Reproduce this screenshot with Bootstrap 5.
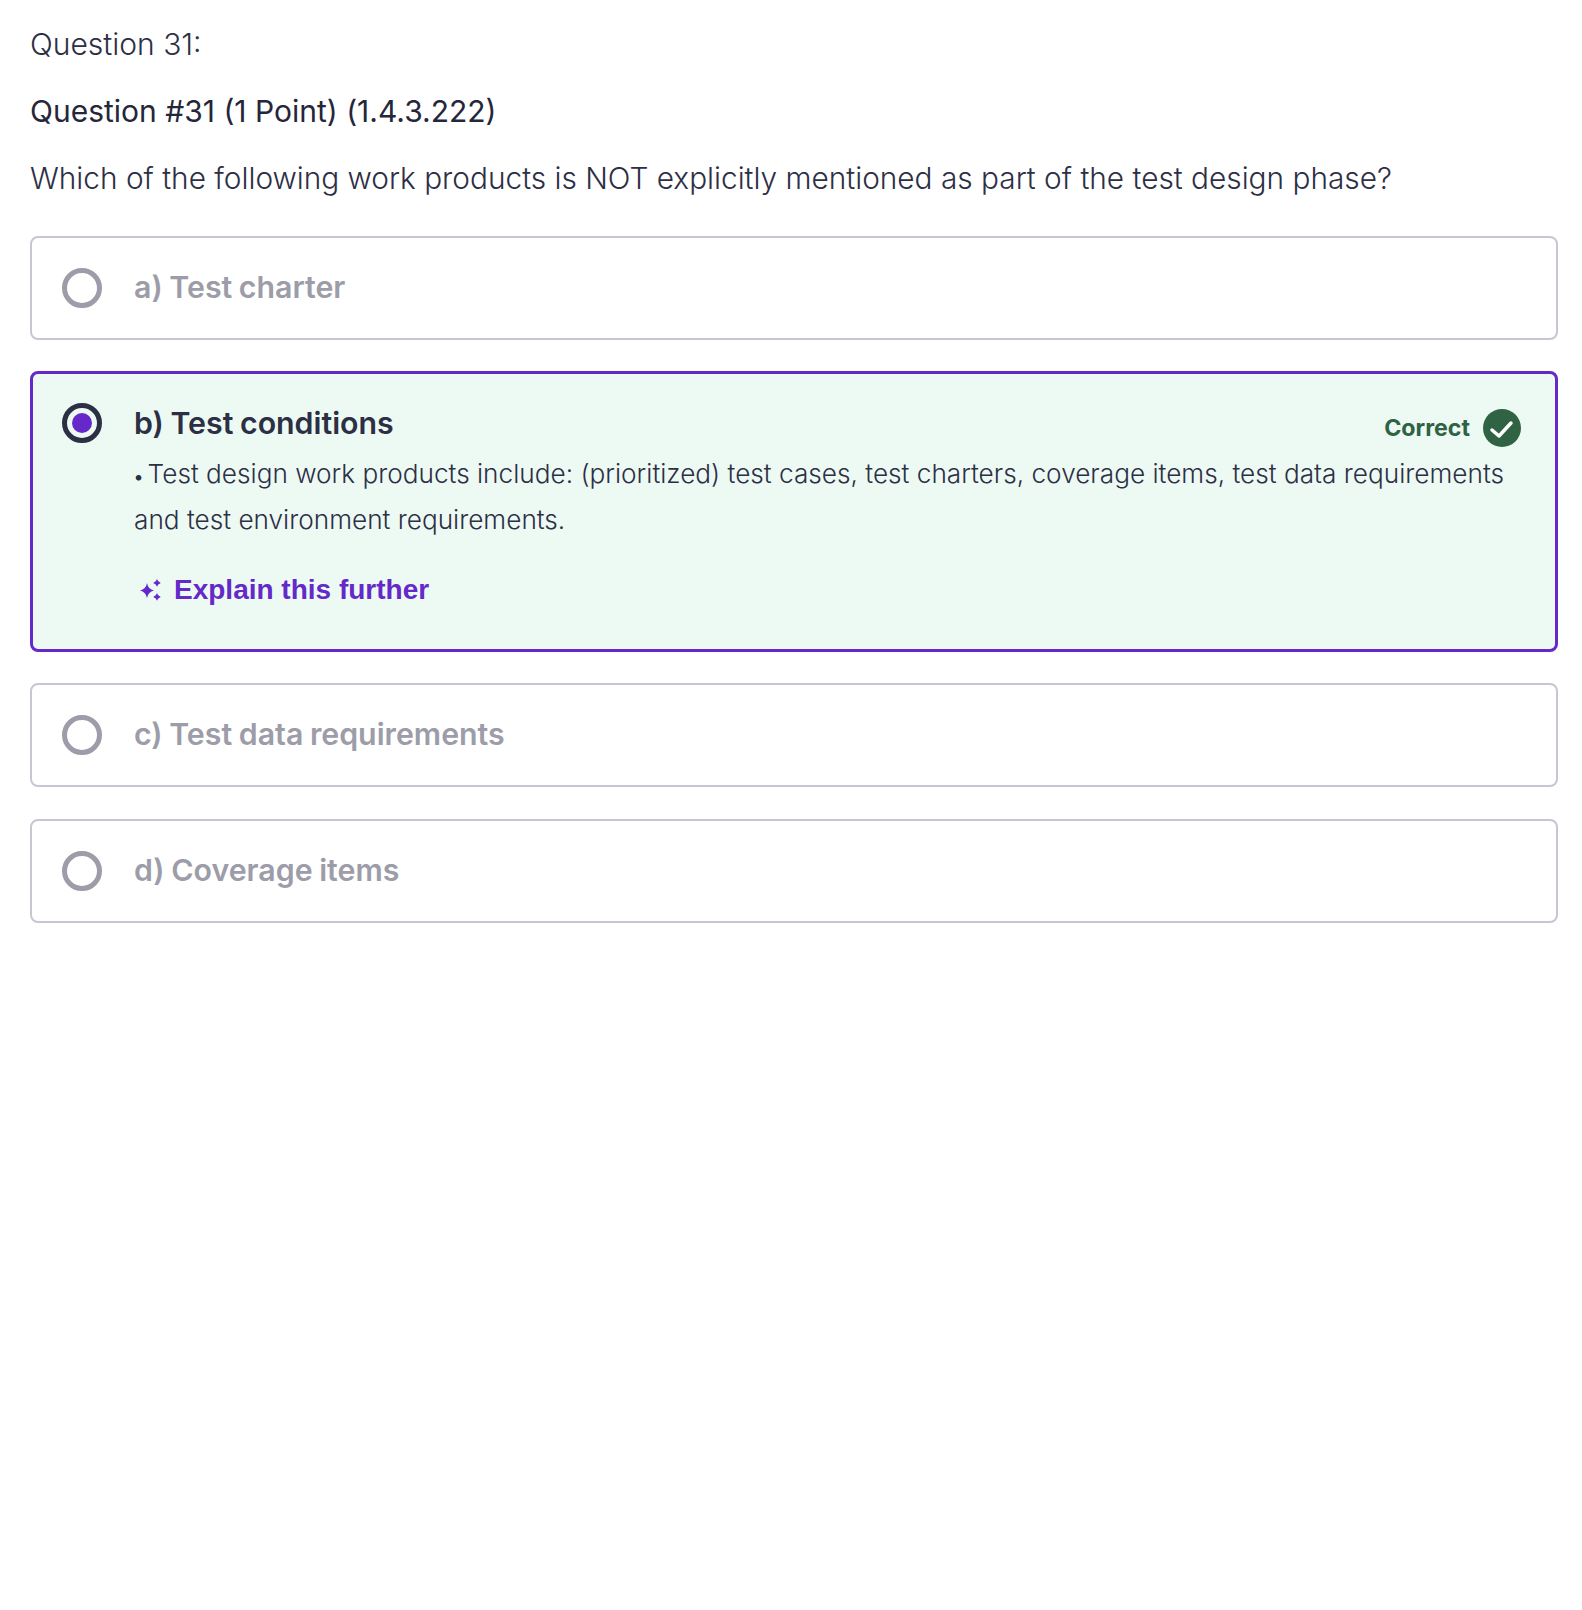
<!DOCTYPE html>
<html lang="en">
<head>
    <meta charset="UTF-8">
    <meta name="viewport" content="width=device-width, initial-scale=1.0">
    <title>Question 31</title>
    <link href="https://cdn.jsdelivr.net/npm/bootstrap@5.3.0/dist/css/bootstrap.min.css" rel="stylesheet">
    <style>
        body {
            background-color: #fff;
            color: #2d2f45;
            font-family: Inter, "Liberation Sans", sans-serif;
            font-size: 30px;
            font-weight: 300;
            padding: 26px 24px 0 30px;
        }
        .q-line {
            line-height: 36px;
            margin-bottom: 31px;
        }
        .q-title {
            color: #25263a;
            font-weight: 400;
        }
        .q-text {
            font-size: 29.8px;
            margin-bottom: 40px;
        }
        .answer-box {
            border: 2px solid #c6c7d3;
            border-radius: 8px;
            padding: 30px 20px 30px 30px;
            margin-bottom: 31px;
            gap: 32px;
            min-height: 104px;
        }
        .answer-box.is-picked {
            border: 3px solid #6529c9;
            background-color: #edfaf4;
            padding: 29px 20px 30px 29px;
            min-height: 281px;
        }
        .answer-box.last-gap {
            margin-bottom: 32px;
        }
        .radio-dot {
            width: 40px;
            height: 40px;
            border: 5px solid #9c9da9;
            border-radius: 50%;
            flex-shrink: 0;
            padding: 5px;
        }
        .is-picked .radio-dot {
            border-color: #2d2f45;
        }
        .radio-dot span {
            width: 20px;
            height: 20px;
            background-color: #6529c9;
            border-radius: 50%;
        }
        .answer-label {
            color: #9c9da9;
            font-size: 30.3px;
            font-weight: 600;
            line-height: 38px;
            padding-bottom: 2px;
            word-spacing: -1px;
        }
        .is-picked .answer-label {
            color: #2d2f45;
            margin-top: 1px;
        }
        .correct-tag {
            color: #2f6343;
            font-size: 23.2px;
            font-weight: 700;
            gap: 13px;
            margin-top: 6px;
            margin-right: 14px;
        }
        .answer-why {
            font-size: 26.2px;
            line-height: 43px;
            margin-top: 5px;
        }
        .why-bullet {
            font-size: 18px;
            font-weight: 600;
        }
        .explain-link {
            color: #6529c9;
            font-family: "Liberation Sans", Arial, sans-serif;
            font-size: 28px;
            font-weight: 700;
            margin-top: 28px;
            gap: 13px;
            padding-left: 6px;
            text-decoration: none;
        }
    </style>
</head>
<body>
    <p class="q-line">Question 31:</p>
    <p class="q-line q-title">Question #31 (1 Point) (1.4.3.222)</p>
    <p class="q-line q-text">Which of the following work products is NOT explicitly mentioned as part of the test design phase?</p>

    <div class="answer-box d-flex align-items-center">
        <div class="radio-dot"></div>
        <div class="answer-label">a) Test charter</div>
    </div>

    <div class="answer-box is-picked d-flex align-items-start">
        <div class="radio-dot d-flex"><span></span></div>
        <div class="flex-grow-1">
            <div class="d-flex justify-content-between align-items-start">
                <div class="answer-label">b) Test conditions</div>
                <div class="correct-tag d-flex align-items-center">
                    Correct
                    <svg width="38" height="38" viewBox="0 0 38 38">
                        <circle cx="19" cy="19" r="19" fill="#2f6343"/>
                        <path d="M9 21l7 6 12-13" fill="none" stroke="#fff" stroke-width="3.500" stroke-linecap="round" stroke-linejoin="round"/>
                    </svg>
                </div>
            </div>
            <div class="answer-why"><span class="why-bullet">• </span>Test design work products include: (prioritized) test cases, test charters, coverage items, test data requirements<br>and test environment requirements.</div>
            <a class="explain-link d-inline-flex align-items-center" href="#">
                <svg width="21" height="22" viewBox="0 0 21 22" fill="#6529c9">
                    <path d="M7 4q1 6 7 7.500q-6 1.500-7 7.500q-1-6-7-7.500q6-1.500 7-7.500z"/>
                    <path d="M17 0q.6 3 3.800 3.900q-3.200.9-3.800 3.900q-.6-3-3.800-3.900q3.200-.9 3.800-3.900z"/>
                    <path d="M17 14q.6 3 3.800 3.900q-3.200.9-3.800 3.900q-.6-3-3.800-3.900q3.200-.9 3.800-3.900z"/>
                </svg>
                Explain this further
            </a>
        </div>
    </div>

    <div class="answer-box last-gap d-flex align-items-center">
        <div class="radio-dot"></div>
        <div class="answer-label">c) Test data requirements</div>
    </div>

    <div class="answer-box d-flex align-items-center">
        <div class="radio-dot"></div>
        <div class="answer-label">d) Coverage items</div>
    </div>

    <script src="https://cdn.jsdelivr.net/npm/bootstrap@5.3.0/dist/js/bootstrap.bundle.min.js"></script>
</body>
</html>
